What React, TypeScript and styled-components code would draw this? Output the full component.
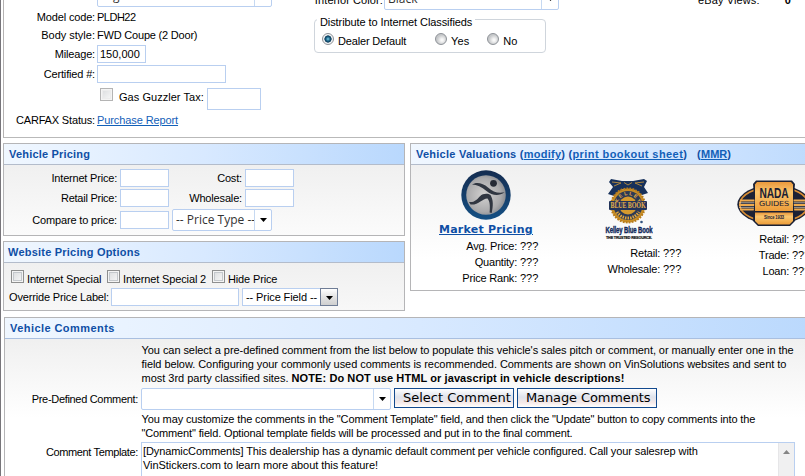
import React from "react";
import styled, { createGlobalStyle, css } from "styled-components";

const Global = createGlobalStyle`
  html, body { margin: 0; padding: 0; background: #fff; overflow: hidden; }
  * { box-sizing: border-box; }
`;

const Page = styled.div`
  width: 805px;
  height: 476px;
  overflow: hidden;
  border-left: 1px solid #77757a;
  padding-left: 2px;
  display: flex;
  flex-direction: column;
  font: 11px/14px "Liberation Sans", Arial, sans-serif;
  letter-spacing: -0.16px;
  color: #000;
  white-space: nowrap;
`;

const Text = styled.span<{ $ls?: number }>`
  letter-spacing: ${(p) => p.$ls ?? -0.16}px;
`;

const Link = styled.a<{ $ls?: number }>`
  color: #1260b8;
  text-decoration: underline;
  letter-spacing: ${(p) => p.$ls ?? -0.1}px;
`;

/* top details panel */
const Details = styled.section`
  width: 830px;
  height: 138px;
  flex: none;
  border-left: 1px solid #b5b3b3;
  border-bottom: 1px solid #b9b9b9;
  display: flex;
  margin-bottom: 5px;
`;

const DetailColumn = styled.div`
  width: 310px;
  flex: none;
`;

const DetailRow = styled.div<{ $h: number; $gap?: number }>`
  display: flex;
  align-items: center;
  height: ${(p) => p.$h}px;
  margin-top: ${(p) => p.$gap ?? 0}px;
`;

const Label = styled.label<{ $w: number; $gap?: number; $ls?: number }>`
  width: ${(p) => p.$w}px;
  flex: none;
  margin-right: ${(p) => p.$gap ?? 2}px;
  display: flex;
  justify-content: flex-end;
  letter-spacing: ${(p) => p.$ls ?? -0.16}px;
`;

const Field = styled.div<{ $w: number; $h?: number }>`
  width: ${(p) => p.$w}px;
  height: ${(p) => p.$h ?? 18}px;
  flex: none;
  border: 1px solid #b9cff0;
  background: #fff;
  padding: 1px 2px;
`;

const Combo = styled.div<{ $w: number }>`
  width: ${(p) => p.$w}px;
  height: 22px;
  flex: none;
  display: flex;
  border: 1px solid #b9cff0;
  border-radius: 2px;
  background: #fff;
  font: 12px/20px "Open Sans", "Noto Sans", sans-serif;
  letter-spacing: 0;
  color: #333;
`;

const ComboValue = styled.span`
  flex: 1;
  min-width: 0;
  padding-left: 3px;
`;

const ComboArrow = styled.span`
  width: 17px;
  flex: none;
  border-left: 1px solid #c6d9f2;
  display: flex;
  align-items: center;
  justify-content: center;
`;

const Caret = () => (
  <svg width="7" height="4" viewBox="0 0 7 4">
    <path d="M0 0H7L3.5 4Z" fill="#000" />
  </svg>
);

const Check = styled.span<{ $soft?: boolean }>`
  width: 13px;
  height: 13px;
  flex: none;
  border: 1px solid ${(p) => (p.$soft ? "#b4b4b4" : "#8e8f8f")};
  background: linear-gradient(135deg, #d8dadc, #fafafa);
  box-shadow: inset 0 0 0 1px #f4f4f4, inset 0 0 0 2px ${(p) => (p.$soft ? "#ececec" : "#c4c8cc")};
`;

const MiddleColumn = styled.div`
  width: 384px;
  flex: none;
`;

const TopCombo = styled.div<{ $h: number }>`
  display: flex;
  height: ${(p) => p.$h}px;
  align-items: flex-end;
`;

const Distribute = styled.div`
  width: 232px;
  height: 34px;
  margin-top: 9px;
  border: 1px solid #cfd5dc;
  border-radius: 4px;
  padding-top: 12px;
  display: flex;
  position: relative;
`;

const Legend = styled.span`
  position: absolute;
  top: -5px;
  left: 2px;
  padding: 0 3px;
  background: #fff;
  letter-spacing: -0.09px;
`;

const RadioItem = styled.label<{ $ml: number }>`
  display: flex;
  height: 18px;
  margin-left: ${(p) => p.$ml}px;
  gap: 4px;
  span { padding-top: 2px; }
`;

const Radio = styled.i<{ $on?: boolean }>`
  width: 12px;
  height: 12px;
  margin-top: 1px;
  border: 1px solid #8d9197;
  border-radius: 50%;
  background: ${(p) =>
    p.$on
      ? "radial-gradient(circle at 5px 5px, #7fd0e8 0, #1c6286 2px, #0d3a58 3.3px, #f2f4f5 3.9px)"
      : "radial-gradient(circle at 6px 6px, #f8f8f8 1px, #c6c8ca 5px)"};
`;

const Views = styled.div`
  display: flex;
  width: 110px;
  height: 14px;
  margin-top: -7px;
  gap: 25px;
  letter-spacing: 0.12px;
`;

/* titled panels */
const Panel = styled.section<{ $w: number; $h: number }>`
  width: ${(p) => p.$w}px;
  height: ${(p) => p.$h}px;
  flex: none;
  border: 1px solid #b5b5b7;
  background: linear-gradient(#f0f0f0 22px, #fff 115px);
`;

const Title = styled.h2<{ $pl?: number; $ls: number }>`
  margin: 0;
  height: 21px;
  padding-left: ${(p) => p.$pl ?? 5}px;
  border-bottom: 1px solid #b3bccb;
  background: linear-gradient(90deg, #f0f7ff 0, #d8e9ff 50%, #b9d8fd 100%);
  font-size: 11px;
  line-height: 21px;
  font-weight: bold;
  color: #0f4fa5;
  letter-spacing: ${(p) => p.$ls}px;
`;

const Columns = styled.div`
  display: flex;
  gap: 5px;
  height: 168px;
  flex: none;
`;

const LeftStack = styled.div`
  display: flex;
  flex-direction: column;
  gap: 5px;
  width: 402px;
  flex: none;
`;

const PriceRow = styled.div<{ $mt: number; $h?: number }>`
  display: flex;
  align-items: center;
  height: ${(p) => p.$h ?? 18}px;
  margin-top: ${(p) => p.$mt}px;
`;

const PriceTypeCombo = styled(Combo)`
  margin-left: 3px;
`;

const OptionRow = styled.div`
  display: flex;
  height: 18px;
  padding: 7px 0 0 7px;
  gap: 3px;
`;

const OptionLabel = styled.span<{ $w: number }>`
  width: ${(p) => p.$w}px;
  flex: none;
  padding-top: 2px;
  letter-spacing: -0.14px;
`;

const OverrideRow = styled.div`
  display: flex;
  align-items: center;
  height: 18px;
  margin-top: 7px;
  padding-left: 3px;
`;

const ClassicSelect = styled.div`
  width: 96px;
  height: 18px;
  margin-left: 3px;
  border: 1px solid #b9cff0;
  background: #fff;
  display: flex;
  justify-content: space-between;
  padding-left: 3px;
  line-height: 17px;
  letter-spacing: -0.1px;
`;

const ClassicArrow = styled.span`
  width: 18px;
  height: 18px;
  margin: -1px;
  border: 1px solid #6f7d96;
  background: linear-gradient(#fff, #e3e3e3 50%, #cfcfcf);
  display: flex;
  align-items: center;
  justify-content: center;
  padding-top: 2px;
`;

/* valuations */
const Providers = styled.div`
  display: grid;
  grid-template-columns: 150px 136px 154px;
`;

const Provider = styled.div<{ $pt: number }>`
  display: flex;
  flex-direction: column;
  align-items: center;
  padding-top: ${(p) => p.$pt}px;
  svg { display: block; flex: none; }
`;

const MarketLink = styled.a`
  font: bold 11px/16px "DejaVu Sans", Verdana, sans-serif;
  letter-spacing: 0.24px;
  color: #0f4fa5;
  text-decoration: underline;
  height: 18px;
  margin-top: 2px;
`;

const Values = styled.div<{ $label: number; $mt: number }>`
  align-self: stretch;
  display: grid;
  grid-template-columns: ${(p) => p.$label}px auto;
  column-gap: 3px;
  grid-auto-rows: 16px;
  line-height: 16px;
  margin-top: ${(p) => p.$mt}px;
  letter-spacing: -0.2px;
  span:nth-child(odd) { text-align: right; }
  span:nth-child(even) { letter-spacing: 0; }
`;

/* comments */
const CommentPanel = styled(Panel)`
  margin: 6px 0 0 1px;
  background: linear-gradient(#f0f0f0 22px, #fff 100px);
`;

const CommentTitle = styled(Title)`
  border-bottom-color: #a9bfe0;
`;

const Paragraph = styled.div<{ $mt: number }>`
  margin: ${(p) => p.$mt}px 0 0 136.5px;
  display: flex;
  flex-direction: column;
`;

const NoteText = styled.b`
  letter-spacing: 0.09px;
`;

const CommentRow = styled.div<{ $mt: number; $h: number; $top?: boolean }>`
  display: flex;
  height: ${(p) => p.$h}px;
  margin-top: ${(p) => p.$mt}px;
  ${(p) => (p.$top ? css`align-items: flex-start;` : css`align-items: center;`)}
`;

const Button = styled.button<{ $w: number; $pl: number; $ls: number }>`
  width: ${(p) => p.$w}px;
  height: 20px;
  margin: -3px 0 0 3px;
  padding: 0 0 0 ${(p) => p.$pl}px;
  border: 1px solid #134a8e;
  border-radius: 0;
  background: linear-gradient(#fff, #dfe3ec 45%, #f5e9e8 75%, #fff);
  text-align: left;
  font: 13px/18px "DejaVu Sans", Verdana, sans-serif;
  letter-spacing: ${(p) => p.$ls}px;
  color: #000;
  white-space: nowrap;
`;

const TemplateLabel = styled(Label)`
  padding-top: 3px;
`;

const TextArea = styled.div`
  width: 654px;
  height: 60px;
  border: 1px solid #b9cff0;
  background: #fff;
  display: flex;
  justify-content: space-between;
`;

const AreaText = styled.div`
  padding: 1px 0 0 1px;
  display: flex;
  flex-direction: column;
`;

const Scrollbar = styled.div`
  width: 16px;
  background: #f0f0f1;
  border-left: 1px solid #e6e6e8;
  display: flex;
  justify-content: center;
  padding-top: 7px;
`;

const InteriorLabel = styled.span`
  align-self: flex-start;
  padding-bottom: 3px;
  letter-spacing: 0.1px;
`;

const GasLabel = styled.span`
  width: 88px;
  margin-left: 6px;
  letter-spacing: 0.04px;
  padding-bottom: 4px;
`;

const GasCheck = styled(Check)`
  align-self: flex-start;
`;

const MarketLogo = () => (
  <svg width="50" height="50" viewBox="0 0 50 50">
    <defs>
      <radialGradient id="silver" cx="0.45" cy="0.5" r="0.65">
        <stop offset="0" stopColor="#d2d1d0" />
        <stop offset="0.65" stopColor="#aaaaac" />
        <stop offset="1" stopColor="#73777f" />
      </radialGradient>
      <linearGradient id="ring" x2="0" y2="1">
        <stop offset="0" stopColor="#142c50" />
        <stop offset="1" stopColor="#155084" />
      </linearGradient>
    </defs>
    <circle cx="25" cy="25" r="24.7" fill="url(#ring)" />
    <circle cx="25" cy="25" r="19.8" fill="url(#silver)" />
    <circle cx="32.5" cy="13.3" r="3.4" fill="#252a35" />
    <path d="M11 14.6C15 11.5 22 13 27 17.5C32 22 37 23.6 43.5 22.3C38 26.6 31 25.6 25.5 21C20.5 17 16 15 11 14.6Z" fill="#303641" />
    <path d="M8 32C13 32.8 16 29.5 19 26.2C22 23.2 27 23.3 29.5 25C32.5 30 32.2 36 30.7 43L28.6 42.4C29.2 36 29 31.5 26.5 28.4C22 28 17 35.5 9.5 34.5Z" fill="#303641" />
  </svg>
);

const KelleyLogo = () => (
  <svg width="48" height="62" viewBox="0 0 48 62">
    <path d="M6 0L17 2H28L39 0L42 2L39 8L43 14L37 16L28 10H18L9 17L3 15L8 8L4 3Z" fill="#17315b" />
    <path d="M7 3L16 4L9 7M39 3L30 4L37 7M19 3.5L23 6L27 3.5" fill="none" stroke="#b98d3d" strokeWidth="0.9" />
    <circle cx="23" cy="26.5" r="17" fill="#c88d24" stroke="#b67b1c" strokeWidth="2" strokeDasharray="1.8 1.2" />
    <circle cx="23" cy="26.5" r="14.4" fill="#2c3a55" />
    <circle cx="23" cy="26.5" r="9" fill="#d59a2e" />
    <path id="arcTop" d="M12.6 26.5A10.4 10.4 0 0 1 33.4 26.5" fill="none" />
    <rect x="4" y="22" width="38" height="9" rx="1" fill="#22335a" />
    <path d="M12 33A13 13 0 0 0 34 33" fill="none" stroke="#e0a63e" strokeWidth="3" strokeDasharray="1.5 1" />
    <g fill="#e8b04a" fontWeight="bold">
      <text fontSize="5" fontFamily="Liberation Sans"><textPath href="#arcTop" startOffset="50%" textAnchor="middle" textLength="27">KELLEY</textPath></text>
      <text x="5.5" y="29.3" fontSize="8" fontFamily="Liberation Serif" textLength="35" lengthAdjust="spacingAndGlyphs">BLUE BOOK</text>
    </g>
    <circle cx="36.5" cy="43" r="1.3" fill="#31537e" />
    <g fill="#102a5c" fontFamily="Liberation Sans" fontWeight="bold">
      <text x="0.5" y="54.3" fontSize="9.5" stroke="#102a5c" strokeWidth="0.45" textLength="47" lengthAdjust="spacingAndGlyphs">Kelley Blue Book</text>
      <text x="1" y="60" fontSize="4" fill="#111" stroke="#111" strokeWidth="0.2" textLength="46" lengthAdjust="spacingAndGlyphs">THE TRUSTED RESOURCE.</text>
    </g>
  </svg>
);

const NadaLogo = () => (
  <svg width="74" height="47" viewBox="0 0 74 47">
    <defs>
      <linearGradient id="gold" x2="0" y2="1">
        <stop offset="0" stopColor="#e9983c" />
        <stop offset="0.35" stopColor="#fac66f" />
        <stop offset="1" stopColor="#ec9d3a" />
      </linearGradient>
    </defs>
    <ellipse cx="37" cy="24.5" rx="36.7" ry="19.8" fill="#1c2236" />
    <ellipse cx="37" cy="24.5" rx="34.2" ry="17.6" fill="none" stroke="#d98e35" strokeWidth="1.6" />
    <path d="M3 20.5H71M2 25H72M3 29.5H71" stroke="#efaa4d" strokeWidth="1.9" />
    <path d="M2 22.8H72M2 27.3H72" stroke="#f6e3c6" strokeWidth="0.7" />
    <path d="M19 0.5H55L58 4L56.5 21L58 41L53 46H21L16 41L17.5 21L16 4Z" fill="#1a2034" />
    <path d="M20 2H54L56 4.5V31H18V4.5Z" fill="url(#gold)" />
    <path d="M18 32.5H56V41L52.5 44.5H21.5L18 41Z" fill="url(#gold)" />
    <g fill="#1b2032" textAnchor="middle">
      <text x="37" y="17.6" fontFamily="Liberation Sans" fontWeight="bold" fontSize="15.5" textLength="29" lengthAdjust="spacingAndGlyphs">NADA</text>
      <text x="37" y="26" fontFamily="DejaVu Sans" fontSize="7" textLength="30" lengthAdjust="spacingAndGlyphs">GUIDES</text>
      <text x="37" y="39" fontFamily="Liberation Sans" fontWeight="bold" fontSize="5" textLength="20" lengthAdjust="spacingAndGlyphs">Since 1933</text>
    </g>
  </svg>
);

export default function App() {
  return (
    <>
      <Global />
      <Page>
        <Details>
          <DetailColumn>
            <TopCombo $h={7}>
              <Label $w={91}>{""}</Label>
              <Combo $w={175}>
                <ComboValue>Highline</ComboValue>
                <ComboArrow />
              </Combo>
            </TopCombo>
            <DetailRow $h={18} $gap={1}><Label $w={91}>Model code:</Label><Text $ls={-0.5}>PLDH22</Text></DetailRow>
            <DetailRow $h={18}><Label $w={91} $ls={0}>Body style:</Label><Text $ls={-0.2}>FWD Coupe (2 Door)</Text></DetailRow>
            <DetailRow $h={18} $gap={1}><Label $w={91}>Mileage:</Label><Field $w={49}><Text $ls={0}>150,000</Text></Field></DetailRow>
            <DetailRow $h={18} $gap={2}><Label $w={91}>Certified #:</Label><Field $w={129} /></DetailRow>
            <DetailRow $h={22} $gap={5}>
              <Label $w={94}>{""}</Label>
              <GasCheck $soft />
              <GasLabel>Gas Guzzler Tax:</GasLabel>
              <Field $w={54} $h={22} />
            </DetailRow>
            <DetailRow $h={18} $gap={1}><Label $w={91}>CARFAX Status:</Label><Link>Purchase Report</Link></DetailRow>
          </DetailColumn>
          <MiddleColumn>
            <TopCombo $h={10}>
              <Label $w={69} $gap={1} $ls={0}><InteriorLabel>Interior Color:</InteriorLabel></Label>
              <Combo $w={175}>
                <ComboValue>Black</ComboValue>
                <ComboArrow><Caret /></ComboArrow>
              </Combo>
            </TopCombo>
            <Distribute>
              <Legend>Distribute to Internet Classifieds</Legend>
              <RadioItem $ml={7}><Radio $on /><span>Dealer Default</span></RadioItem>
              <RadioItem $ml={29}><Radio /><Text $ls={0.1}>Yes</Text></RadioItem>
              <RadioItem $ml={18}><Radio /><Text $ls={0}>No</Text></RadioItem>
            </Distribute>
          </MiddleColumn>
          <Views><span>eBay Views:</span><b>0</b></Views>
        </Details>

        <Columns>
          <LeftStack>
            <Panel $w={402} $h={93}>
              <Title $ls={0.19}>Vehicle Pricing</Title>
              <PriceRow $mt={4}>
                <Label $w={113} $gap={3} $ls={-0.2}>Internet Price:</Label><Field $w={49} />
                <Label $w={73} $gap={3}>Cost:</Label><Field $w={49} />
              </PriceRow>
              <PriceRow $mt={2}>
                <Label $w={113} $gap={3} $ls={-0.25}>Retail Price:</Label><Field $w={49} />
                <Label $w={73} $gap={3}>Wholesale:</Label><Field $w={49} />
              </PriceRow>
              <PriceRow $mt={2} $h={22}>
                <Label $w={113} $gap={3}>Compare to price:</Label><Field $w={49} />
                <PriceTypeCombo $w={100}>
                  <ComboValue>-- Price Type --</ComboValue>
                  <ComboArrow><Caret /></ComboArrow>
                </PriceTypeCombo>
              </PriceRow>
            </Panel>
            <Panel $w={402} $h={70}>
              <Title $pl={4} $ls={0.22}>Website Pricing Options</Title>
              <OptionRow>
                <Check /><OptionLabel $w={77}>Internet Special</OptionLabel>
                <Check /><OptionLabel $w={86}>Internet Special 2</OptionLabel>
                <Check /><OptionLabel $w={60}>Hide Price</OptionLabel>
              </OptionRow>
              <OverrideRow>
                <Label $w={102} $gap={2}>Override Price Label:</Label>
                <Field $w={128} />
                <ClassicSelect>
                  -- Price Field --
                  <ClassicArrow><Caret /></ClassicArrow>
                </ClassicSelect>
              </OverrideRow>
            </Panel>
          </LeftStack>
          <Panel $w={442} $h={148}>
            <Title $ls={0.25}>
              Vehicle Valuations (<Link $ls={0.25}>modify</Link>) (<Link $ls={0.43}>print bookout sheet</Link>)&nbsp;&nbsp; (<Link $ls={0}>MMR</Link>)
            </Title>
            <Providers>
              <Provider $pt={5}>
                <MarketLogo />
                <MarketLink>Market Pricing</MarketLink>
                <Values $label={106} $mt={-2}>
                  <span>Avg. Price:</span><span>???</span>
                  <span>Quantity:</span><span>???</span>
                  <span>Price Rank:</span><span>???</span>
                </Values>
              </Provider>
              <Provider $pt={14}>
                <KelleyLogo />
                <Values $label={99} $mt={4}>
                  <span>Retail:</span><span>???</span>
                  <span>Wholesale:</span><span>???</span>
                </Values>
              </Provider>
              <Provider $pt={15}>
                <NadaLogo />
                <Values $label={92} $mt={4}>
                  <span>Retail:</span><span>???</span>
                  <span>Trade:</span><span>???</span>
                  <span>Loan:</span><span>???</span>
                </Values>
              </Provider>
            </Providers>
          </Panel>
        </Columns>

        <CommentPanel $w={830} $h={190}>
          <CommentTitle $ls={0.44}>Vehicle Comments</CommentTitle>
          <Paragraph $mt={4}>
            <Text $ls={-0.06}>You can select a pre-defined comment from the list below to populate this vehicle's sales pitch or comment, or manually enter one in the</Text>
            <Text $ls={-0.06}>field below. Configuring your commonly used comments is recommended. Comments are shown on VinSolutions websites and sent to</Text>
            <Text $ls={-0.01}>most 3rd party classified sites. <NoteText>NOTE: Do NOT use HTML or javascript in vehicle descriptions!</NoteText></Text>
          </Paragraph>
          <CommentRow $mt={3} $h={22}>
            <Label $w={133} $gap={3} $ls={-0.31}>Pre-Defined Comment:</Label>
            <Combo $w={250}><ComboValue /><ComboArrow><Caret /></ComboArrow></Combo>
            <Button $w={120} $pl={8} $ls={0}>Select Comment</Button>
            <Button $w={140} $pl={8} $ls={-0.12}>Manage Comments</Button>
          </CommentRow>
          <Paragraph $mt={2}>
            <Text $ls={-0.127}>You may customize the comments in the "Comment Template" field, and then click the "Update" button to copy comments into the</Text>
            <Text $ls={-0.139}>"Comment" field. Optional template fields will be processed and put in to the final comment.</Text>
          </Paragraph>
          <CommentRow $mt={2} $h={60} $top>
            <TemplateLabel $w={133} $gap={3} $ls={-0.36}>Comment Template:</TemplateLabel>
            <TextArea>
              <AreaText>
                <Text $ls={-0.095}>[DynamicComments] This dealership has a dynamic default comment per vehicle configured. Call your salesrep with</Text>
                <Text $ls={-0.054}>VinStickers.com to learn more about this feature!</Text>
              </AreaText>
              <Scrollbar>
                <svg width="7" height="4" viewBox="0 0 7 4"><path d="M0 4L3.5 0L7 4Z" fill="#858585" /></svg>
              </Scrollbar>
            </TextArea>
          </CommentRow>
        </CommentPanel>
      </Page>
    </>
  );
}
